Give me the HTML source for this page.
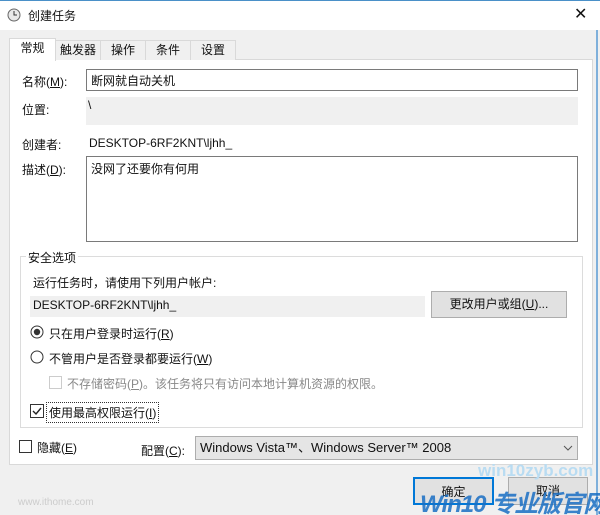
<!DOCTYPE html>
<html><head><meta charset="utf-8"><style>
*{box-sizing:border-box;margin:0;padding:0}
html,body{width:600px;height:515px;overflow:hidden}
body{background:#f0f0f0;font-family:"Liberation Sans","Noto Sans CJK SC",sans-serif;font-size:12px;color:#111;position:relative}
.a{position:absolute;white-space:nowrap}
.title{left:0;top:0;width:600px;height:30px;background:#fff;border-top:1px solid #4a90c8}
.panel{left:9px;top:59px;width:584px;height:406px;background:#fff;border:1px solid #d9d9d9}
.tab{top:40px;height:20px;border:1px solid #d9d9d9;border-bottom:none;background:#f0f0f0;text-align:center;line-height:19px}
.inp{background:#fff;border:1px solid #7a7a7a}
.gray{background:#f0f0f0}
.btn{background:#e1e1e1;border:1px solid #adadad;text-align:center}
.cb{width:13px;height:13px;border:1px solid #333;background:#fff}
</style></head><body>
<div class="a title"></div>
<svg class="a" style="left:7px;top:8px" width="14" height="14"><circle cx="7" cy="7" r="6" fill="#e8e8e8" stroke="#666"/><path d="M7 3v4h3" stroke="#333" fill="none"/></svg>
<div class="a" style="left:28px;top:7px">创建任务</div>
<div class="a" style="left:574px;top:4px;font-size:16px">✕</div>
<div class="a panel"></div>
<div class="a tab" style="left:55px;width:46px">触发器</div>
<div class="a tab" style="left:100px;width:46px">操作</div>
<div class="a tab" style="left:145px;width:46px">条件</div>
<div class="a tab" style="left:190px;width:46px">设置</div>
<div class="a tab" style="left:9px;top:38px;height:23px;width:47px;background:#fff">常规</div>
<div class="a" style="left:22px;top:73px">名称(<u>M</u>):</div>
<div class="a inp" style="left:86px;top:69px;width:492px;height:22px;padding:2px 4px">断网就自动关机</div>
<div class="a" style="left:22px;top:101px">位置:</div>
<div class="a gray" style="left:86px;top:97px;width:492px;height:28px"></div>
<div class="a" style="left:88px;top:98px">\</div>
<div class="a" style="left:22px;top:136px">创建者:</div>
<div class="a" style="left:89px;top:136px">DESKTOP-6RF2KNT\ljhh_</div>
<div class="a" style="left:22px;top:161px">描述(<u>D</u>):</div>
<div class="a inp" style="left:86px;top:156px;width:492px;height:86px;padding:3px 4px">没网了还要你有何用</div>
<div class="a" style="left:20px;top:256px;width:563px;height:172px;border:1px solid #dcdcdc"></div>
<div class="a" style="left:26px;top:249px;background:#fff;padding:0 2px">安全选项</div>
<div class="a" style="left:33px;top:274px">运行任务时，请使用下列用户帐户:</div>
<div class="a gray" style="left:30px;top:296px;width:395px;height:21px;padding:2px 3px">DESKTOP-6RF2KNT\ljhh_</div>
<div class="a btn" style="left:431px;top:291px;width:136px;height:27px;line-height:25px">更改用户或组(<u>U</u>)...</div>
<svg class="a" style="left:30px;top:325px" width="14" height="14"><circle cx="7" cy="7" r="6" fill="#fff" stroke="#333"/><circle cx="7" cy="7" r="3.2" fill="#333"/></svg>
<div class="a" style="left:49px;top:325px">只在用户登录时运行(<u>R</u>)</div>
<svg class="a" style="left:30px;top:350px" width="14" height="14"><circle cx="7" cy="7" r="6" fill="#fff" stroke="#333"/></svg>
<div class="a" style="left:49px;top:350px">不管用户是否登录都要运行(<u>W</u>)</div>
<div class="a cb" style="left:49px;top:376px;border-color:#ccc"></div>
<div class="a" style="left:67px;top:375px;color:#888">不存储密码(<u>P</u>)。该任务将只有访问本地计算机资源的权限。</div>
<svg class="a" style="left:30px;top:404px" width="14" height="14"><rect x=".5" y=".5" width="13" height="13" fill="#fff" stroke="#333"/><path d="M3 7l3 3 5-6" stroke="#222" stroke-width="1.4" fill="none"/></svg>
<div class="a" style="left:46px;top:402px;border:1px dotted #333;padding:1px 2px">使用最高权限运行(<u>I</u>)</div>
<div class="a cb" style="left:19px;top:440px"></div>
<div class="a" style="left:37px;top:439px">隐藏(<u>E</u>)</div>
<div class="a" style="left:141px;top:442px">配置(<u>C</u>):</div>
<div class="a btn" style="left:195px;top:436px;width:383px;height:24px;line-height:22px;text-align:left;padding-left:4px;font-size:13px;background:#e5e5e5">Windows Vista™、Windows Server™ 2008</div>
<svg class="a" style="left:563px;top:444px" width="10" height="8"><path d="M1 2l4 4 4-4" stroke="#555" fill="none"/></svg>
<div class="a btn" style="left:413px;top:477px;width:81px;height:28px;line-height:26px;border:2px solid #0078d7">确定</div>
<div class="a btn" style="left:508px;top:477px;width:80px;height:28px;line-height:26px">取消</div>
<div class="a" style="left:596px;top:30px;width:2px;height:485px;background:#7fb0db"></div>
<div class="a" style="left:18px;top:497px;color:#ccc;font-size:10px">www.ithome.com</div>
<div class="a" style="left:478px;top:461px;color:#b9dcf2;font-size:17px;font-weight:bold">win10zyb.com</div>
<div class="a" style="left:420px;top:484px;color:#1a6fc4;font-size:24px;font-weight:bold;font-style:italic;opacity:.85;letter-spacing:-1px">Win10 专业版官网</div>
</body></html>
